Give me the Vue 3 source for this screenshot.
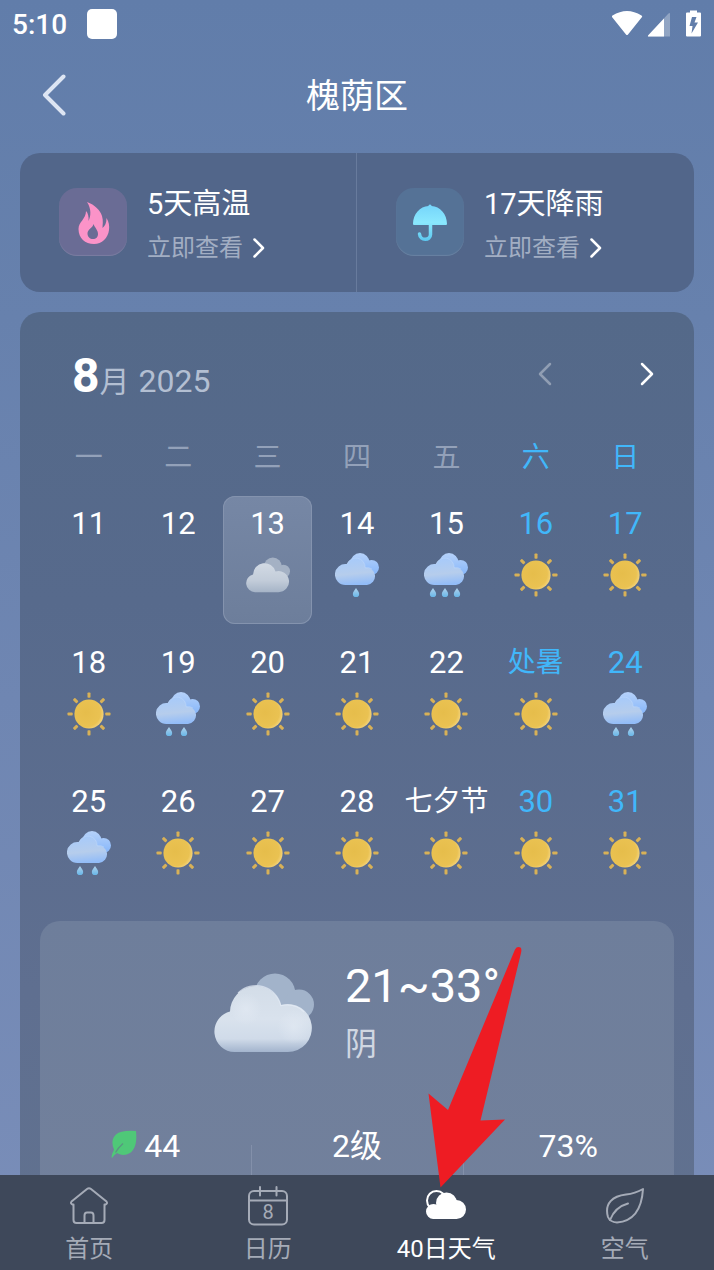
<script setup>
const weekdays = ['一', '二', '三', '四', '五', '六', '日']

const drops = { rain1: [21], rain2: [13, 28], rain3: [9, 21, 33] }

const days = [
  { label: '11' },
  { label: '12' },
  { label: '13', icon: 'cloudy', selected: true },
  { label: '14', icon: 'rain1' },
  { label: '15', icon: 'rain3' },
  { label: '16', icon: 'sun', weekend: true },
  { label: '17', icon: 'sun', weekend: true },
  { label: '18', icon: 'sun' },
  { label: '19', icon: 'rain2' },
  { label: '20', icon: 'sun' },
  { label: '21', icon: 'sun' },
  { label: '22', icon: 'sun' },
  { label: '处暑', icon: 'sun', weekend: true, named: true },
  { label: '24', icon: 'rain2', weekend: true },
  { label: '25', icon: 'rain2' },
  { label: '26', icon: 'sun' },
  { label: '27', icon: 'sun' },
  { label: '28', icon: 'sun' },
  { label: '七夕节', icon: 'sun', named: true },
  { label: '30', icon: 'sun', weekend: true },
  { label: '31', icon: 'sun', weekend: true }
]

const rays = [0, 45, 90, 135, 180, 225, 270, 315]
</script>

<template>
  <div class="app">
    <svg class="defs" width="0" height="0" aria-hidden="true">
      <defs>
        <radialGradient id="sunFill" cx="0.4" cy="0.45" r="0.65">
          <stop offset="0" stop-color="#e6bd4b" />
          <stop offset="0.75" stop-color="#eac252" />
          <stop offset="1" stop-color="#f6d888" />
        </radialGradient>
        <linearGradient id="rainBack" gradientUnits="userSpaceOnUse" x1="0" y1="0" x2="0" y2="22">
          <stop offset="0" stop-color="#b6d2fa" />
          <stop offset="1" stop-color="#86b6fa" />
        </linearGradient>
        <linearGradient id="rainFront" x1="0.3" y1="0" x2="0.45" y2="1">
          <stop offset="0" stop-color="#a6cafb" />
          <stop offset="0.6" stop-color="#b6cdec" />
          <stop offset="1" stop-color="#92bcf8" />
        </linearGradient>
        <linearGradient id="dropFill" x1="0" y1="0" x2="0" y2="1">
          <stop offset="0" stop-color="#b2d2ec" />
          <stop offset="1" stop-color="#66b6e8" />
        </linearGradient>
        <linearGradient id="greyFront" x1="0" y1="0" x2="0" y2="1">
          <stop offset="0" stop-color="#d3dde8" />
          <stop offset="0.5" stop-color="#d9e2ed" />
          <stop offset="0.8" stop-color="#d0dbe9" />
          <stop offset="1" stop-color="#a3b4cd" />
        </linearGradient>
        <linearGradient id="greySmall" x1="0" y1="0" x2="0" y2="1">
          <stop offset="0" stop-color="#d2dae4" />
          <stop offset="0.6" stop-color="#c2ccd9" />
          <stop offset="1" stop-color="#a6b4c7" />
        </linearGradient>
        <radialGradient id="glow">
          <stop offset="0" stop-color="#e4ebf4" stop-opacity="0.6" />
          <stop offset="1" stop-color="#e4ebf4" stop-opacity="0" />
        </radialGradient>
        <linearGradient id="umbrellaFill" gradientUnits="userSpaceOnUse" x1="0" y1="16" x2="0" y2="53">
          <stop offset="0" stop-color="#74d4fa" />
          <stop offset="0.5" stop-color="#8ae8fe" />
          <stop offset="1" stop-color="#5cc8f0" />
        </linearGradient>
      </defs>
    </svg>

    <header class="status">
      <span class="clock">5:10</span>
      <span class="notice"></span>
      <svg class="signals" width="90" height="30" viewBox="0 0 90 30" aria-hidden="true">
        <path d="M0 8Q-.5 7 .5 6.500Q15-2.500 29.500 6.500Q30.500 7 30 8L16 25.500Q15 26.500 14 25.500Z" fill="#fff" />
        <path d="M58 5V27.500H37Q35 27.500 36.500 26L56 5Q58 3 58 5Z" fill="#fff" opacity=".3" />
        <path d="M52 9.500V27.500H37Q35 27.500 36.500 26Z" fill="#fff" />
        <path fill-rule="evenodd" d="M78 1.500h7v2h3q1 0 1 1v22q0 1-1 1H75q-1 0-1-1V4.500q0-1 1-1h3ZM80 8L77.500 17H80.500L79.500 24.500L86 13.500H82.500L84.500 8Z" fill="#fff" />
      </svg>
    </header>

    <div class="titlebar">
      <button class="plain back" aria-label="返回">
        <svg width="24" height="42" viewBox="0 0 24 42"><path d="M21.500 2.500L3 21L21.500 39.500" /></svg>
      </button>
      <h1>槐荫区</h1>
    </div>

    <main class="content">
      <section class="alerts">
        <a class="alert" href="#heat">
          <span class="badge heat">
            <svg width="68" height="68" viewBox="0 0 68 68" aria-hidden="true">
              <path fill-rule="evenodd" fill="#fb93c8" d="M28 14C36 17 41 22 43 28C44.500 33 43.500 37 43.500 40C46 38 47.500 35 47.500 30C50 34 50.500 38 50 42C49 50 43 56 35 56C26 56 19.500 50 19.500 41C19.500 34 27 31 27 23C29 25 30 29 29.500 33C32 28 32.500 21 28 14ZM34.500 36C34 40 28.500 41 28.500 45.500C28.500 49 31 51 34 51C37 51 39 49 39 46C39 42 36 40 34.500 36Z" />
            </svg>
          </span>
          <span class="alert-text">
            <span class="alert-title">5天高温</span>
            <span class="alert-more">立即查看
              <svg width="12" height="20" viewBox="0 0 12 20"><path d="M1.500 1.500L10 10L1.500 18.500" /></svg>
            </span>
          </span>
        </a>
        <a class="alert" href="#rain">
          <span class="badge rain">
            <svg width="68" height="68" viewBox="0 0 68 68" aria-hidden="true">
              <path fill="url(#umbrellaFill)" d="M17 36C17 26 24 18.500 32.500 18V17.500Q34 15.500 35.500 17.500V18C44 18.500 51 26 51 36Q51 37 50 37H18Q17 37 17 36Z" />
              <path fill="none" stroke="url(#umbrellaFill)" stroke-width="3.500" stroke-linecap="round" d="M34.500 36V46.500C34.500 53 24 53 23.500 46" />
            </svg>
          </span>
          <span class="alert-text">
            <span class="alert-title">17天降雨</span>
            <span class="alert-more">立即查看
              <svg width="12" height="20" viewBox="0 0 12 20"><path d="M1.500 1.500L10 10L1.500 18.500" /></svg>
            </span>
          </span>
        </a>
      </section>

      <section class="calendar">
        <div class="month-row">
          <h2><b>8</b><span class="yue">月</span><span class="year">2025</span></h2>
          <div class="pager">
            <button class="plain prev" aria-label="上个月">
              <svg width="14" height="24" viewBox="0 0 14 24"><path d="M12 2L2 12L12 22" /></svg>
            </button>
            <button class="plain next" aria-label="下个月">
              <svg width="14" height="24" viewBox="0 0 14 24"><path d="M2 2L12 12L2 22" /></svg>
            </button>
          </div>
        </div>

        <div class="grid weekdays">
          <span v-for="(w, i) in weekdays" :key="w" :class="{ weekend: i > 4 }">{{ w }}</span>
        </div>

        <div class="grid days">
          <button
            v-for="d in days"
            :key="d.label"
            class="plain day"
            :class="{ selected: d.selected, weekend: d.weekend, named: d.named }"
          >
            <span class="day-label">{{ d.label }}</span>
            <svg v-if="d.icon === 'sun'" width="44" height="44" viewBox="0 0 44 44" aria-hidden="true">
              <rect
                v-for="r in rays"
                :key="r"
                x="20.500"
                y="0.500"
                width="3"
                height="5.200"
                rx="0.800"
                fill="#d8b157"
                :transform="`rotate(${r} 22 22)`"
              />
              <circle cx="22" cy="22" r="14.600" fill="url(#sunFill)" />
            </svg>
            <svg v-else-if="d.icon === 'cloudy'" width="44" height="44" viewBox="0 -10 100 100" aria-hidden="true">
              <g fill="#a4b1c4">
                <circle cx="61" cy="21" r="20.500" />
                <circle cx="85" cy="31.500" r="15" />
              </g>
              <path fill="url(#greySmall)" d="M20.500 79A20.500 20.500 0 0 1 16 38.600A26 26 0 0 1 67 32A24 24 0 1 1 73.500 79Z" />
            </svg>
            <svg v-else-if="d.icon" width="44" height="44" viewBox="0 0 44 44" aria-hidden="true">
              <g fill="url(#rainBack)">
                <circle cx="25" cy="9.700" r="9.600" />
                <circle cx="36.500" cy="14.400" r="7.500" />
              </g>
              <path fill="url(#rainFront)" d="M10.600 31.900A10.450 10.450 0 1 1 11.800 11.100A9.500 9.500 0 0 1 30.200 14.600A8.700 8.700 0 1 1 32 31.900Z" />
              <path fill="none" stroke="#c4dcfb" stroke-opacity=".6" stroke-width=".8" d="M12 11.200A9.400 9.400 0 0 1 30.200 15Q34 14 37 16" />
              <path
                v-for="x in drops[d.icon]"
                :key="x"
                fill="url(#dropFill)"
                :transform="`translate(${x} 0)`"
                d="M0 35C1.200 37 3.200 39 3.200 41A3.200 3.200 0 0 1-3.200 41C-3.200 39-1.200 37 0 35Z"
              />
            </svg>
          </button>
        </div>

        <article class="detail">
          <div class="summary">
            <svg width="100" height="80" viewBox="0 0 100 80" aria-hidden="true">
              <g fill="#a2b3ca">
                <circle cx="61" cy="21" r="20.500" />
                <circle cx="85" cy="31.500" r="15" />
              </g>
              <path fill="url(#greyFront)" d="M20.500 79A20.500 20.500 0 0 1 16 38.600A26 26 0 0 1 67 32A24 24 0 1 1 73.500 79Z" />
              <circle cx="32" cy="36" r="16" fill="url(#glow)" />
              <circle cx="80" cy="54" r="17" fill="url(#glow)" />
              <path fill="none" stroke="#e6edf6" stroke-opacity=".7" stroke-width="1.200" d="M24 20A25.500 25.500 0 0 1 66.800 32.600Q82 30 90 39" />
            </svg>
            <div>
              <p class="temp">21~33°</p>
              <p class="cond">阴</p>
            </div>
          </div>
          <div class="stats">
            <div class="stat">
              <svg width="26" height="28" viewBox="0 0 26 28" aria-hidden="true">
                <path fill="#4fc878" d="M25 1C26 10 25 19 19 23C14 26 9 25 6 23Q3 25 1 28Q0 27 1.500 23Q2.500 21 3 19.500Q-1 10 5 4.500Q10 0 25 1Z" />
                <path fill="none" stroke="#5b9482" stroke-width="1.200" d="M4.500 22.500Q7 18 12 13.500" />
              </svg>
              44
            </div>
            <div class="stat">2级</div>
            <div class="stat">73%</div>
          </div>
        </article>
      </section>
    </main>

    <nav class="tabs">
      <a href="#home">
        <svg width="40" height="40" viewBox="0 0 40 40" aria-hidden="true">
          <path d="M18 3Q20 1.500 22 3L37.500 15.500Q39 17.500 36.500 18.500H35.500V34Q35.500 37 32.500 37H7.500Q4.500 37 4.500 34V18.500H3.500Q1 17.500 2.500 15.500Z" />
          <path d="M15.500 37V29.500Q15.500 26.500 18 26.500H22Q24.500 26.500 24.500 29.500V37" />
        </svg>
        首页
      </a>
      <a href="#calendar">
        <svg width="40" height="40" viewBox="0 0 40 40" aria-hidden="true">
          <rect x="1" y="5" width="38" height="33.500" rx="5" />
          <path d="M1 14.500H39M12 1V9.500M28.500 1V9.500" />
          <text x="20" y="33">8</text>
        </svg>
        日历
      </a>
      <a class="active" href="#forecast" aria-current="page">
        <svg width="40" height="40" viewBox="0 0 40 40" aria-hidden="true">
          <circle cx="10.500" cy="14.500" r="9.500" />
          <circle class="solid" cx="7.500" cy="25.500" r="6.500" />
          <circle class="solid" cx="20.500" cy="17" r="9.500" />
          <circle class="solid" cx="30.500" cy="23.500" r="8.500" />
          <path class="solid" d="M7.500 20H30V32H7.500Z" />
        </svg>
        40日天气
      </a>
      <a href="#air">
        <svg width="40" height="40" viewBox="0 0 40 40" aria-hidden="true">
          <path d="M38 3C37 19 32 35 12 36.500Q5 36 3 31C-1 17 8 10 21 8.500Q30 7.500 38 3Z" />
          <path d="M5 34Q10 21 23 17.500" />
        </svg>
        空气
      </a>
    </nav>

    <svg class="arrow" width="96" height="242" viewBox="0 0 96 242" aria-hidden="true">
      <path fill="#ee1c23" d="M12.500 241.500L.5 147.500L20 164L87 3.500Q89 0 92.500 1.500Q94 3 93 7L52.500 174.500L77 173.500Z" />
    </svg>
  </div>
</template>

<style>
body {
  margin: 0;
}
</style>

<style scoped>
.app {
  position: relative;
  height: 100vh;
  display: flex;
  flex-direction: column;
  overflow: hidden;
  color: #fff;
  font-family: Roboto, 'Noto Sans CJK SC', sans-serif;
  background: linear-gradient(#617daa, #6781ad 25%, #6f86b2 55%, #7a8eb9);
}
.defs {
  position: absolute;
}
.plain {
  border: 0;
  padding: 0;
  background: none;
  color: inherit;
  font: inherit;
  cursor: pointer;
}
svg {
  display: block;
  flex: none;
}
a {
  color: inherit;
  text-decoration: none;
}
h1,
h2,
p {
  margin: 0;
  font-weight: 400;
}

.status {
  display: flex;
  align-items: center;
  height: 48px;
  padding: 0 12px;
}
.clock {
  padding-top: 2px;
  font-size: 28px;
  font-weight: 500;
  line-height: 46px;
}
.notice {
  width: 30px;
  height: 30px;
  margin-left: 20px;
  border-radius: 5px;
  background: #fff;
}
.signals {
  margin-left: auto;
}

.titlebar {
  display: grid;
  grid-template-columns: 66px 1fr 66px;
  align-items: center;
  height: 94px;
}
.back {
  justify-self: end;
}
.back path {
  fill: none;
  stroke: #dde5f3;
  stroke-width: 4;
  stroke-linecap: round;
  stroke-linejoin: round;
}
h1 {
  padding-top: 2px;
  font-size: 34px;
  line-height: 48px;
  text-align: center;
}

.content {
  flex: 1;
  min-height: 0;
  overflow: hidden;
  display: flex;
  flex-direction: column;
  gap: 20px;
  padding: 11px 20px 0;
}
.alerts {
  flex: none;
  display: grid;
  grid-template-columns: 1fr 1fr;
  border-radius: 20px;
  background: #52668a;
}
.alert {
  display: flex;
  align-items: center;
  gap: 20px;
  padding: 21px 0 22px 39px;
}
.alert:first-child {
  border-right: 1px solid #687b9d;
}
.badge {
  border-radius: 18px;
  box-shadow: inset 0 -1px 1px rgba(255, 255, 255, 0.12);
}
.heat {
  background: #6a6c95;
}
.rain {
  background: #557296;
}
.alert-text {
  display: flex;
  flex-direction: column;
  padding-top: 8px;
}
.alert-title {
  font-size: 29px;
  line-height: 44px;
}
.alert-more {
  display: flex;
  align-items: center;
  gap: 10px;
  font-size: 24px;
  line-height: 44px;
  color: #a2aec3;
}
.alert-more path,
.pager path {
  fill: none;
  stroke: #fff;
  stroke-width: 2.5;
  stroke-linecap: round;
  stroke-linejoin: round;
}

.calendar {
  flex: none;
  padding: 32px 20px 0;
  border-radius: 20px 20px 0 0;
  background: linear-gradient(#546989, #576a8c 30%, #5f6f90 70%, #61728f);
}
.month-row {
  display: flex;
  justify-content: space-between;
  align-items: flex-start;
  padding: 0 20px 0 32px;
}
h2 {
  line-height: 64px;
  color: #b3bfd2;
}
h2 b {
  font-size: 48px;
  color: #fff;
}
.yue {
  font-size: 30px;
}
.year {
  margin-left: 9px;
  font-size: 32px;
}
.pager {
  display: flex;
  gap: 88px;
  padding-top: 18px;
}
.prev {
  opacity: 0.35;
}
.grid {
  display: grid;
  grid-template-columns: repeat(7, minmax(0, 1fr));
  margin: 0 4px;
}
.weekdays {
  padding: 22px 0 18px;
  font-size: 28px;
  line-height: 40px;
  text-align: center;
  color: #93a1b9;
}
.weekdays .weekend,
.day.weekend {
  color: #41b7fa;
}
.days {
  row-gap: 11px;
}
.day {
  display: flex;
  flex-direction: column;
  align-items: center;
  gap: 9px;
  height: 128px;
  padding-top: 8px;
  border-radius: 12px;
}
.day.selected {
  background: linear-gradient(#7687a5, #6d7e9b);
  box-shadow: inset 0 0 0 1px #8493ae;
}
.day-label {
  font-size: 31px;
  line-height: 40px;
  white-space: nowrap;
}
.named .day-label {
  font-size: 28px;
}

.detail {
  margin-top: 19px;
  height: 360px;
  border-radius: 20px;
  background: linear-gradient(#6e7e9b, #73819c);
}
.summary {
  display: flex;
  justify-content: center;
  gap: 31px;
  padding-top: 37px;
}
.summary svg {
  margin-top: 15px;
}
.temp {
  font-size: 47px;
  line-height: 56px;
}
.cond {
  font-size: 32px;
  line-height: 60px;
  color: #d0d7e2;
}
.stats {
  display: grid;
  grid-template-columns: repeat(3, 1fr);
  margin-top: 49px;
}
.stat {
  display: flex;
  justify-content: center;
  gap: 7px;
  height: 110px;
  font-size: 32px;
  line-height: 46px;
}
.stat svg {
  margin-top: 7px;
}
.stat + .stat {
  background: linear-gradient(#8390aa, #8390aa) 0 22px / 1px 60px no-repeat;
}

.tabs {
  flex: none;
  display: grid;
  grid-template-columns: repeat(4, 1fr);
  height: 95px;
  background: #3e485a;
}
.tabs a {
  display: flex;
  flex-direction: column;
  align-items: center;
  padding-top: 11px;
  font-size: 24px;
  line-height: 46px;
  color: #a5abb7;
}
.tabs svg {
  fill: none;
  stroke: currentColor;
  stroke-width: 2;
  stroke-linecap: round;
  stroke-linejoin: round;
}
.tabs text {
  fill: currentColor;
  stroke: none;
  font-size: 20px;
  line-height: 20px;
  text-anchor: middle;
}
.tabs .active {
  color: #fff;
}
.tabs .solid {
  fill: #fff;
}
.arrow {
  position: absolute;
  left: 428px;
  top: 946px;
  pointer-events: none;
}
</style>
